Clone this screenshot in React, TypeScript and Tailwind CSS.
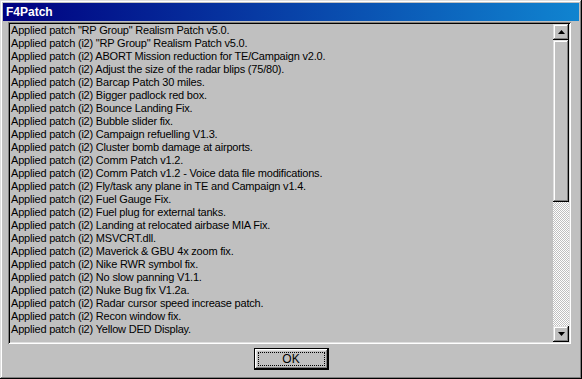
import React from "react";

const lines = [
  'Applied patch "RP Group" Realism Patch v5.0.',
  'Applied patch (i2) "RP Group" Realism Patch v5.0.',
  "Applied patch (i2) ABORT Mission reduction for TE/Campaign v2.0.",
  "Applied patch (i2) Adjust the size of the radar blips (75/80).",
  "Applied patch (i2) Barcap Patch 30 miles.",
  "Applied patch (i2) Bigger padlock red box.",
  "Applied patch (i2) Bounce Landing Fix.",
  "Applied patch (i2) Bubble slider fix.",
  "Applied patch (i2) Campaign refuelling V1.3.",
  "Applied patch (i2) Cluster bomb damage at airports.",
  "Applied patch (i2) Comm Patch v1.2.",
  "Applied patch (i2) Comm Patch v1.2 - Voice data file modifications.",
  "Applied patch (i2) Fly/task any plane in TE and Campaign v1.4.",
  "Applied patch (i2) Fuel Gauge Fix.",
  "Applied patch (i2) Fuel plug for external tanks.",
  "Applied patch (i2) Landing at relocated airbase MIA Fix.",
  "Applied patch (i2) MSVCRT.dll.",
  "Applied patch (i2) Maverick & GBU 4x zoom fix.",
  "Applied patch (i2) Nike RWR symbol fix.",
  "Applied patch (i2) No slow panning V1.1.",
  "Applied patch (i2) Nuke Bug fix V1.2a.",
  "Applied patch (i2) Radar cursor speed increase patch.",
  "Applied patch (i2) Recon window fix.",
  "Applied patch (i2) Yellow DED Display.",
];

const raised =
  "shadow-[inset_-1px_-1px_#000,inset_1px_1px_#dfdfdf,inset_-2px_-2px_#808080,inset_2px_2px_#fff]";

function Arrow({ up }: { up?: boolean }) {
  return (
    <svg width="7" height="4" viewBox="0 0 7 4">
      {up ? (
        <polygon points="3.5,0 7,4 0,4" fill="#000" />
      ) : (
        <polygon points="0,0 7,0 3.5,4" fill="#000" />
      )}
    </svg>
  );
}

export default function App() {
  return (
    <div
      className={`w-[582px] h-[379px] bg-[#c0c0c0] p-[3px] flex flex-col ${raised}`}
      style={{ fontFamily: '"Liberation Sans", Arial, sans-serif' }}
    >
      <div className="h-[18px] bg-[linear-gradient(to_right,#000080,#1084d0)] flex items-center pl-[3px]">
        <span className="text-white font-bold text-[12px] leading-none">F4Patch</span>
      </div>
      <div className="mt-[1px] ml-[5px] w-[563px] h-[322px] p-[2px] flex shadow-[inset_1px_1px_#808080,inset_-1px_-1px_#fff,inset_2px_2px_#000,inset_-2px_-2px_#dfdfdf]">
        <div className="flex-1 overflow-hidden pl-[1px]">
          {lines.map((l, i) => (
            <div
              key={i}
              className="h-[13px] text-[11px] leading-[13px] tracking-[-0.2px] text-black whitespace-nowrap"
            >
              {l}
            </div>
          ))}
        </div>
        <div className="w-[16px] flex flex-col">
          <div className={`h-[16px] flex items-center justify-center ${raised}`}>
            <Arrow up />
          </div>
          <div className={`h-[162px] bg-[#c0c0c0] ${raised}`} />
          <div className="flex-1 bg-[image:repeating-conic-gradient(#c0c0c0_0_25%,#fff_0_50%)] bg-[length:2px_2px]" />
          <div className={`h-[16px] flex items-center justify-center ${raised}`}>
            <Arrow />
          </div>
        </div>
      </div>
      <div className="mt-[4px] flex justify-center">
        <div className="w-[75px] h-[22px] border border-black p-0">
          <div className="w-full h-full flex items-center justify-center p-[3px] shadow-[inset_-1px_-1px_#000,inset_1px_1px_#fff,inset_-2px_-2px_#808080,inset_2px_2px_#dfdfdf]">
            <div className="w-full h-full border border-dotted border-black flex items-center justify-center text-[12px] text-black leading-none">
              OK
            </div>
          </div>
        </div>
      </div>
    </div>
  );
}
